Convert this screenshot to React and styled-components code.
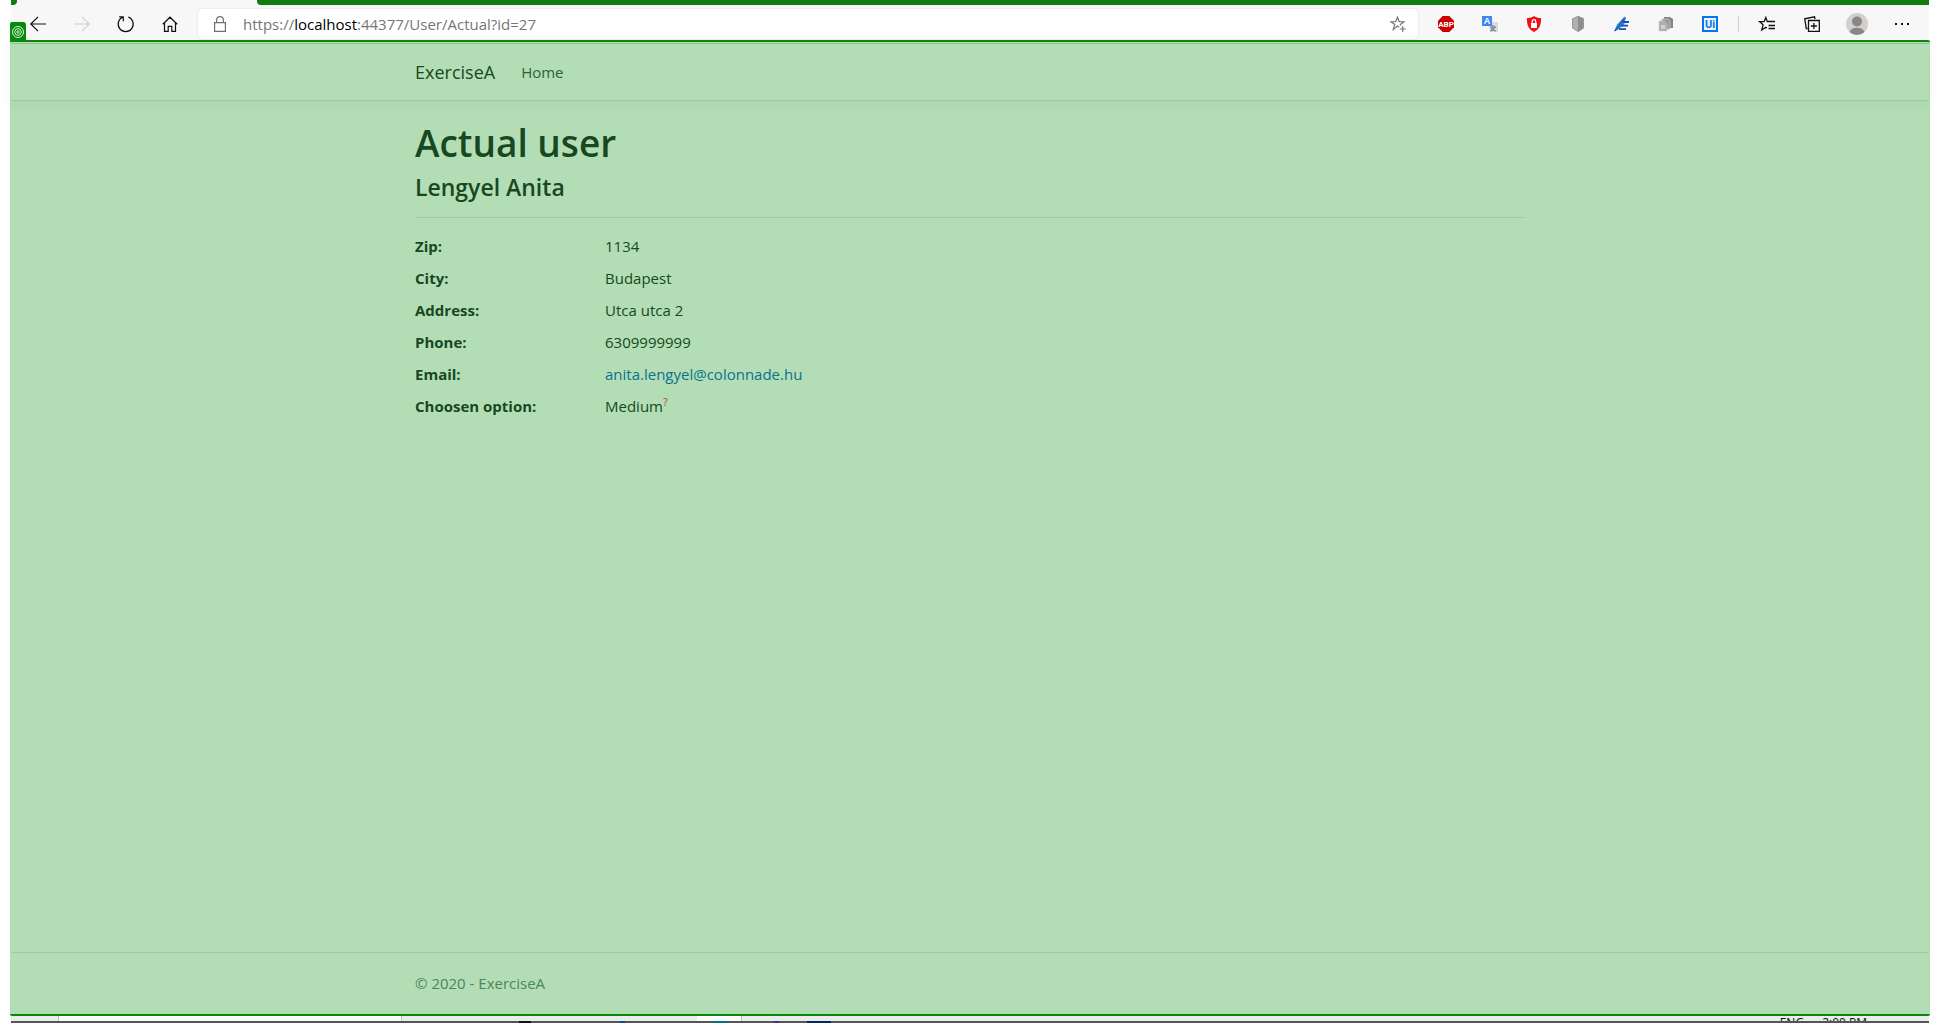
import React from "react";
import styled, { createGlobalStyle } from "styled-components";

const Global = createGlobalStyle`
  *, *::before, *::after { box-sizing: border-box; }
  body { margin: 0; background: #fff; overflow: hidden; color: #174822;
    font-family: "Open Sans", "Noto Sans", sans-serif; font-size: 15px; line-height: 24px; }
  h1, h2, dl, dd, p { margin: 0; }
`;

const Screen = styled.div`
  height: 100vh;
  padding: 0 10px;
  display: flex;
  flex-direction: column;
`;

const TabStrip = styled.div`
  flex: none;
  height: 5px;
  margin: 0 1px;
  display: flex;
  background: #f7f7f7;
`;
const TabEdge = styled.div`
  width: 6px;
  background: #107c10;
  border-bottom-right-radius: 4px;
`;
const ActiveTab = styled.div`
  width: 240px;
`;
const TabRest = styled.div`
  flex: 1;
  background: #107c10;
  border-bottom-left-radius: 4px;
`;

const Toolbar = styled.header`
  flex: none;
  height: 35px;
  margin: 0 1px;
  padding: 4px 11px 1px;
  display: flex;
  align-items: center;
  background: #f7f7f7;
  color: #101010;
`;
const Group = styled.div`
  display: flex;
  align-items: center;
  gap: ${(p) => p.$gap}px;
`;
const IconButton = styled.button`
  flex: none;
  width: ${(p) => p.$w || 32}px;
  height: 30px;
  padding: 0;
  border: 0;
  background: none;
  color: inherit;
  display: grid;
  place-items: center;
  svg { display: block; overflow: visible; }
  &:disabled { color: #d0d0d0; }
`;
const AddressBar = styled.div`
  flex: 1;
  height: 30px;
  margin: 0 12px;
  padding: 0 5px 0 16px;
  display: flex;
  align-items: center;
  gap: 17px;
  background: #fff;
  border-radius: 4px;
  box-shadow: 0 0 2px rgba(0, 0, 0, 0.14);
  color: #707070;
`;
const Url = styled.a`
  flex: 1;
  color: #767676;
  text-decoration: none;
  b { font-weight: 400; color: #000; }
`;
const Divider = styled.div`
  width: 1px;
  height: 16px;
  background: #cfcfcf;
`;

const Page = styled.div`
  position: relative;
  flex: 1;
  display: flex;
  flex-direction: column;
  background: #b3deb5;
  border-top: 2px solid #068a0b;
  border-bottom: 2px solid #068a0b;
  border-radius: 0 2px 2px 2px;
`;
const Badge = styled.div`
  position: absolute;
  left: 0;
  top: -20px;
  width: 16px;
  height: 20px;
  display: grid;
  place-items: center;
  background: #068a0b;
  border-radius: 2px 3px 0 0;
`;
const Container = styled.div`
  width: 100%;
  max-width: 1140px;
  margin: 0 auto;
  padding: 0 15px;
`;
const Navbar = styled.nav`
  height: 59px;
  margin: 0 1px;
  padding-top: 1px;
  border-top: 1px solid #b3deb5;
  border-bottom: 1px solid #9dcba8;
  box-shadow: inset 0 1px #94bd98, 0 4px 12px rgba(0, 60, 20, 0.06);
  display: flex;
  align-items: center;
`;
const NavItems = styled(Container)`
  display: flex;
  align-items: center;
  gap: 26px;
`;
const Brand = styled.a`
  color: #174822;
  font-size: 18px;
  text-decoration: none;
`;
const NavLink = styled.a`
  color: #2c6136;
  text-decoration: none;
`;
const Main = styled.main`
  flex: 1;
  padding-top: 18px;
`;
const Title = styled.h1`
  font-size: 37px;
  line-height: 48px;
  font-weight: 600;
  margin-bottom: 6px;
`;
const Name = styled.h2`
  font-size: 23px;
  line-height: 28px;
  font-weight: 600;
`;
const Rule = styled.hr`
  margin: 16px 0;
  border: 0;
  border-top: 1px solid #a0cba4;
`;
const Details = styled.dl`
  display: grid;
  grid-template-columns: 190px 1fr;
  row-gap: 8px;
  dt { font-weight: 700; }
`;
const MailLink = styled.a`
  color: #0c7090;
  text-decoration: none;
`;
const Hint = styled.sup`
  color: #b5403c;
  font-size: 11px;
  line-height: 0;
`;
const Footer = styled.footer`
  height: 62px;
  margin: 0 1px;
  padding-bottom: 2px;
  border-top: 1px solid #9dcba8;
  color: #4c8560;
  display: flex;
  align-items: center;
`;

const Desktop = styled.footer`
  flex: none;
  height: 7px;
  margin: 0 1px;
  display: flex;
  flex-direction: column;
  overflow: hidden;
`;
const StatusStrip = styled.div`
  height: 5px;
  display: flex;
  background: #ececec;
  overflow: hidden;
`;
const Segment = styled.div`
  flex: ${(p) => (p.$w ? "none" : "1")};
  width: ${(p) => p.$w || 0}px;
  background: ${(p) => (p.$white ? "#fff" : "transparent")};
  border-right: ${(p) => (p.$edge ? "1px solid #bdbdbd" : "0")};
`;
const Tray = styled.div`
  display: flex;
  gap: 18px;
  padding: 2px 62px 0 0;
  color: #111;
  font-size: 12px;
  line-height: 10px;
`;
const Taskbar = styled.div`
  height: 2px;
  background: #555;
  display: flex;
`;
const TaskIcon = styled.div`
  flex: none;
  width: ${(p) => p.$w}px;
  margin-left: ${(p) => p.$gap}px;
  background: ${(p) => p.$c};
`;

const Svg = ({ w = 16, h = w, children }) => (
  <svg width={w} height={h} viewBox={`0 0 ${w} ${h}`} fill="none" stroke="currentColor" strokeWidth="1.2" aria-hidden="true">
    {children}
  </svg>
);

const Back = () => <Svg><path d="M16 8H.8M8 .8.8 8 8 15.2" /></Svg>;
const Forward = () => <Svg><path d="M0 8h15.2M8 .8 15.2 8 8 15.2" /></Svg>;
const Refresh = () => <Svg><path d="M10.3 1A7.5 7.5 0 1 1 5.1 1M1.2.8h4.1v4.5" /></Svg>;
const Home = () => <Svg><path d="M.8 8.2 8 1.2l7.2 7M2.5 6.7v8.700h3.700v-5h3.600v5h3.700V6.700" strokeWidth="1.2" /></Svg>;
const Lock = () => <Svg w={12} h={16}><path d="M.6 6.6h10.8v8.8H.6zM2.6 6.4V4a3.4 3.4 0 0 1 6.8 0v2.4" /></Svg>;
const AddStar = () => (
  <Svg><path d="M9.2 11.2 7.5 10 3.2 13.4 4.8 8.5.9 5.7h4.8L7.5 1l1.7 4.7H14l-3.7 2.8.3 1M12.7 10v6M9.7 13h6" strokeWidth="1.1" /></Svg>
);
const AdBlock = () => (
  <Svg>
    <path d="M4.7 0h6.6L16 4.7v6.6L11.3 16H4.7L0 11.3V4.7z" fill="#c90000" stroke="none" />
    <text x="8" y="11" textAnchor="middle" fontFamily="Roboto, sans-serif" fontSize="8" fontWeight="700" fill="#fff" stroke="none">ABP</text>
  </Svg>
);
const Translate = () => (
  <Svg>
    <path d="M6 6h10v10H8z" fill="#d8dadc" stroke="none" />
    <path d="M0 0h10v10H0z" fill="#4284f4" stroke="none" />
    <text x="5" y="8.4" textAnchor="middle" fontSize="9" fontWeight="700" fill="#fff" stroke="none">A</text>
    <path d="M8 11h6M11 9.2v1.8M13 11c-1 2.3-2.6 3.3-4.6 3.8M9.3 12c1 1.8 2.4 2.5 4.5 3" stroke="#607b91" />
  </Svg>
);
const RedShield = () => (
  <Svg>
    <path d="M8 0c2 1.6 4.3 2 7 2 .3 6-1 11-7 14C2 13 .7 8 1 2c2.7 0 5-.4 7-2z" fill="#ee1119" stroke="none" />
    <path d="M5 7h6v5H5z" fill="#fff" stroke="none" />
    <path d="M6.2 7V5.5a1.8 1.8 0 0 1 3.6 0V7" stroke="#fff" />
  </Svg>
);
const GrayShield = () => (
  <Svg>
    <path d="M8 0 14 2.5v9.5L8 16l-6-4V2.5z" fill="#b0b0b0" stroke="none" />
    <path d="M8 0 14 2.5v9.5L8 16z" fill="#8d8d8d" stroke="none" />
    <path d="M8 .5 13.500 3v8.700L8 15.500l-5.500-3.800V3z" stroke="#9a9a9a" strokeWidth="1" />
  </Svg>
);
const Feather = () => (
  <Svg>
    <path d="M0 15.5 3 8.5 10.5.5 12 1.5 10 9 5 13z" fill="#3f8bdd" stroke="none" />
    <path d="M1 15 10.5 2.5" stroke="#0a4fa6" />
    <path d="M9 6h6M7 9.7h7M5 13.2h7" stroke="#174fae" strokeWidth="1.8" />
  </Svg>
);
const Copies = () => (
  <Svg>
    <path d="M6 1h6l3 2v9H6z" fill="#858585" stroke="none" />
    <path d="M4 3h6l2 2v8H4z" fill="#9a9a9a" stroke="#c4c4c4" strokeWidth=".8" />
    <path d="M1 5h5l3 3v7H1z" fill="#adadad" stroke="#c8c8c8" strokeWidth=".5" />
    <path d="M3 9h4v4H3z" fill="#d0d0d0" stroke="none" />
  </Svg>
);
const UiPath = () => (
  <Svg>
    <path d="M1 1h14v14H1z" fill="#e9f4ff" stroke="#0874e8" strokeWidth="2" />
    <text x="8" y="12" textAnchor="middle" fontFamily="Roboto, sans-serif" fontSize="11" fontWeight="700" fill="#0874e8" stroke="none">Ui</text>
  </Svg>
);
const Favorites = () => (
  <Svg><path d="M9 5.7H8.3L6.8 1.5 5.1 5.7H.6l3.5 3.1L2.8 14l4-2.800 1 .7M8.500 5.500H16M9.500 9.500H16M9.500 12.500H16" strokeWidth="1.3" /></Svg>
);
const Collections = () => (
  <Svg><path d="M4.5 4.5h10.800v10.800H4.5zM9.900 7v6M6.900 10h6M3.500 12.500H2.300L.7 2.800 10.500.8l.5 2.200" strokeWidth="1.3" /></Svg>
);
const Profile = () => (
  <Svg w={22}>
    <circle cx="11" cy="11" r="11" fill="#d2d0ce" stroke="none" />
    <circle cx="11" cy="8.5" r="5" fill="#8a8683" stroke="none" />
    <path d="M3.500 19a7.800 6 0 0 1 15 0 11 11 0 0 1-15 0z" fill="#8a8683" stroke="none" />
  </Svg>
);
const More = () => <Svg><path d="M1 7h2v2H1zM7 7h2v2H7zM13 7h2v2h-2z" fill="currentColor" stroke="none" /></Svg>;
const Target = () => (
  <svg width="14" height="14" viewBox="0 0 14 14" fill="none" stroke="#d5f2d5" strokeWidth="1" aria-hidden="true">
    <circle cx="7" cy="7" r="5.5" /><circle cx="7" cy="7" r="3.3" /><circle cx="7" cy="7" r="1.2" />
  </svg>
);

const navigation = [
  ["Back", Back],
  ["Forward", Forward, true],
  ["Refresh", Refresh],
  ["Home page", Home],
];
const extensions = [
  ["Adblock Plus", AdBlock],
  ["Translate", Translate],
  ["Password protection", RedShield],
  ["Shield", GrayShield],
  ["Notes", Feather],
  ["Copy pages", Copies],
  ["UiPath", UiPath],
];
const menus = [
  ["Favorites", Favorites],
  ["Collections", Collections],
  ["Profile", Profile],
  ["More", More],
];
const details = [
  ["Zip:", "1134"],
  ["City:", "Budapest"],
  ["Address:", "Utca utca 2"],
  ["Phone:", "6309999999"],
  ["Email:", <MailLink href="mailto:anita.lengyel@colonnade.hu">anita.lengyel@colonnade.hu</MailLink>],
  ["Choosen option:", <>Medium<Hint>?</Hint></>],
];

const Buttons = ({ items, gap = 12 }) => (
  <Group $gap={gap}>
    {items.map(([label, Icon, off]) => (
      <IconButton key={label} aria-label={label} disabled={off}><Icon /></IconButton>
    ))}
  </Group>
);

export default function App() {
  return (
    <Screen>
      <Global />
      <TabStrip><TabEdge /><ActiveTab /><TabRest /></TabStrip>
      <Toolbar>
        <Buttons items={navigation} />
        <AddressBar>
          <Lock />
          <Url href="#">https://<b>localhost</b>:44377/User/Actual?id=27</Url>
          <IconButton $w={30} aria-label="Add to favorites"><AddStar /></IconButton>
        </AddressBar>
        <Group $gap={12}>
          <Buttons items={extensions} />
          <Divider />
          <Buttons items={menus} gap={13} />
        </Group>
      </Toolbar>
      <Page>
        <Badge><Target /></Badge>
        <Navbar>
          <NavItems>
            <Brand href="#">ExerciseA</Brand>
            <NavLink href="#">Home</NavLink>
          </NavItems>
        </Navbar>
        <Main>
          <Container>
            <Title>Actual user</Title>
            <Name>Lengyel Anita</Name>
            <Rule />
            <Details>
              {details.map(([term, value]) => (
                <React.Fragment key={term}><dt>{term}</dt><dd>{value}</dd></React.Fragment>
              ))}
            </Details>
          </Container>
        </Main>
        <Footer><Container>© 2020 - ExerciseA</Container></Footer>
      </Page>
      <Desktop>
        <StatusStrip>
          <Segment $w={48} $edge />
          <Segment $w={343} $white $edge />
          <Segment $w={295} />
          <Segment $w={45} $white $edge />
          <Segment />
          <Tray><span>ENG</span><span>2:00 PM</span></Tray>
        </StatusStrip>
        <Taskbar>
          <TaskIcon $gap={508} $w={12} $c="#111" />
          <TaskIcon $gap={89} $w={5} $c="#074c87" />
          <TaskIcon $gap={88} $w={16} $c="#087078" />
          <TaskIcon $gap={45} $w={5} $c="#4b2f78" />
          <TaskIcon $gap={28} $w={24} $c="#00285f" />
        </Taskbar>
      </Desktop>
    </Screen>
  );
}
